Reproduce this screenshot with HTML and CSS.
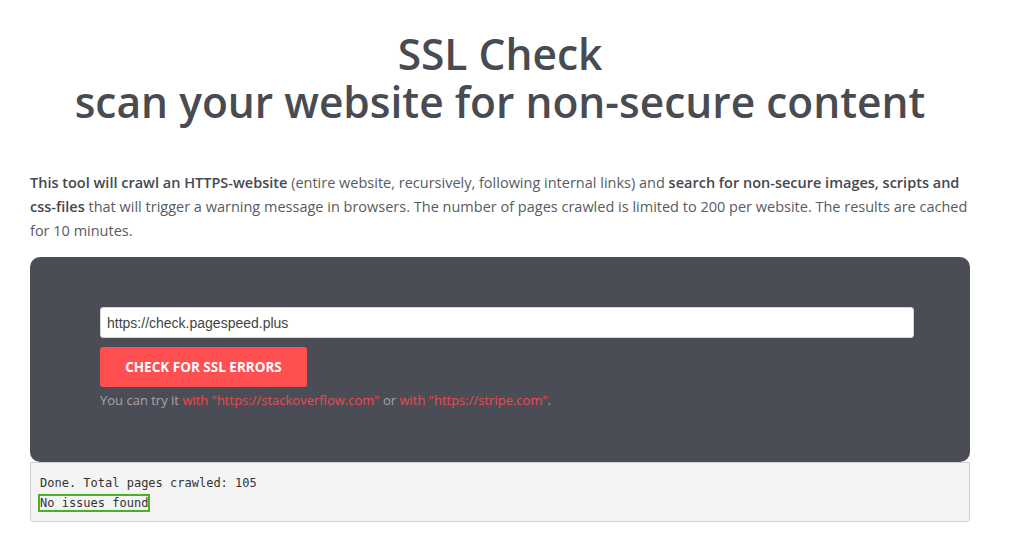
FILE: index.html
```html
<!DOCTYPE html>
<html lang="en">

<head>
    <meta charset="UTF-8">
    <meta name="viewport" content="width=device-width, initial-scale=1.0">
    <title>SSL Check - scan your website for non-secure content</title>
    <link rel="stylesheet" href="styles.css">
</head>

<body>
    <div class="container">
        <h1>SSL Check<br>scan your website for non-secure content</h1>

        <p class="intro"><b>This tool will crawl an HTTPS-website</b> (entire website, recursively, following internal
            links) and <b>search for non-secure images, scripts and <span class="nowrap">css-files</span></b> that will
            trigger a warning message in browsers. The number of pages crawled is limited to 200 per website. The
            results are cached for 10 minutes.
        </p>

        <div class="check-box">
            <form class="check-form" onsubmit="return false">
                <input class="url-input" type="text" value="https://check.pagespeed.plus">
                <button class="check-button" type="submit">CHECK FOR SSL ERRORS</button>
                <div class="hint">You can try it <a href="#">with "https://stackoverflow.com"</a> or <a href="#">with
                        "https://stripe.com"</a>.</div>
            </form>
        </div>

        <div class="result">
            <div>Done. Total pages crawled: 105</div>
            <div><span class="ok">No issues found</span></div>
        </div>
    </div>
</body>

</html>
```

FILE: styles.css
```css
body {
    margin: 0;
    /* room for the scrollbar the original page has */
    padding-right: 16px;
    background: #ffffff;
    color: #4b4e56;
    font-family: "Open Sans", sans-serif;
}

.container {
    width: 940px;
    margin: 0 auto;
    padding-top: 30px;
}

h1 {
    margin: 0;
    font-size: 42.5px;
    line-height: 48px;
    font-weight: 600;
    text-align: center;
    color: #484b52;
}

.intro {
    margin: 45px 0 14px;
    font-size: 14.5px;
    line-height: 24px;
    color: #585b62;
}

.intro b {
    font-weight: 600;
    color: #45484f;
}

.nowrap {
    white-space: nowrap;
}

.check-box {
    background: #4a4d55;
    border-radius: 10px;
    padding: 50px 56px 53px 70px;
}

.url-input {
    display: block;
    box-sizing: border-box;
    width: 100%;
    height: 31px;
    padding: 0 6px;
    border: 1px solid #d6d6d6;
    border-radius: 3px;
    font-family: "Liberation Sans", Arial, sans-serif;
    font-size: 14px;
    color: #444;
}

.check-button {
    display: block;
    margin-top: 9px;
    height: 40px;
    width: 207px;
    border: none;
    border-radius: 3px;
    background: #ff4f50;
    color: #ffffff;
    font-family: "Open Sans", sans-serif;
    font-weight: 700;
    font-size: 13.5px;
}

.hint {
    margin-top: 4px;
    font-size: 13px;
    line-height: 18px;
    color: #a3a5aa;
}

.hint a {
    color: #ec4a52;
    text-decoration: none;
}

.result {
    border: 1px solid #cfcfcf;
    border-radius: 0 0 4px 4px;
    background: #f4f4f4;
    padding: 10px 9px 8px;
    font-family: "DejaVu Sans Mono", monospace;
    font-size: 12px;
    line-height: 20px;
    color: #333333;
}

.ok {
    outline: 2px solid #4ab02a;
}
```
